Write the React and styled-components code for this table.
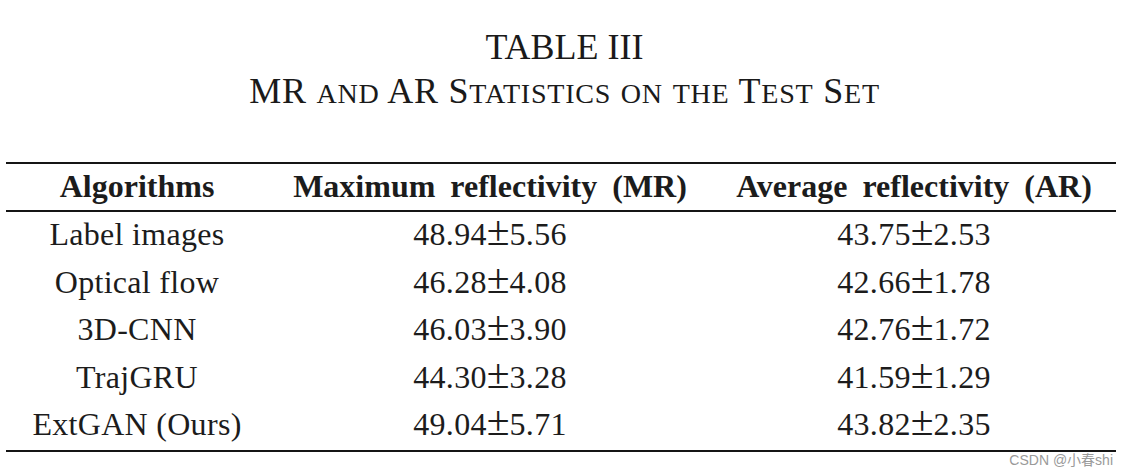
import React from 'react'
import styled, { createGlobalStyle } from 'styled-components';

const GlobalStyle = createGlobalStyle`
  html, body {
    margin: 0;
    padding: 0;
    background: #ffffff;
  }
  body {
    font-family: "Liberation Serif", "Times New Roman", serif;
    color: #1c1c1c;
  }
`;

const Page = styled.div`
  width: 1129px;
  height: 475px;
  overflow: hidden;
  background: #ffffff;
`;

const Caption = styled.div`
  padding-top: 25px;
  text-align: center;
  font-size: 36px;
  line-height: 44px;
  color: #1a1a1a;
`;

const CaptionLine = styled.div`
  letter-spacing: ${p => p.spread || 0}px;
`;

const Sc = styled.span`
  font-size: 0.78em;
`;

const Table = styled.div`
  margin: 46px 0 0 6px;
  width: 1110px;
  border-top: 2px solid #151515;
  border-bottom: 2px solid #151515;
`;

const Row = styled.div`
  display: grid;
  grid-template-columns: 262px 444px 404px;
  text-align: center;
  font-size: 32px;
  height: ${p => (p.head ? '48px' : '47.6px')};
  line-height: ${p => (p.head ? '45px' : '44px')};
  font-weight: ${p => (p.head ? 700 : 400)};
  word-spacing: ${p => (p.head ? '7px' : '0')};
  letter-spacing: ${p => (p.head ? '0' : '0.3px')};
  border-bottom: ${p => (p.head ? '2px solid #151515' : 'none')};
  box-sizing: border-box;
  white-space: nowrap;
`;

const Cell = styled.div``;

const Pm = styled.span`
  font-size: 1.3em;
  line-height: 0;
  letter-spacing: 0;
`;

const Mark = styled.div`
  text-align: right;
  padding-right: 16px;
  font-family: "Liberation Sans", "Noto Sans CJK SC", sans-serif;
  font-size: 14px;
  line-height: 14px;
  padding-top: 1px;
  color: #9a9a9a;
`;

const rows = [
  ['Label images', '48.94', '5.56', '43.75', '2.53'],
  ['Optical flow', '46.28', '4.08', '42.66', '1.78'],
  ['3D-CNN', '46.03', '3.90', '42.76', '1.72'],
  ['TrajGRU', '44.30', '3.28', '41.59', '1.29'],
  ['ExtGAN (Ours)', '49.04', '5.71', '43.82', '2.35'],
];

const Stat = ({ mean, sd }) => (
  <Cell>
    {mean}<Pm>±</Pm>{sd}
  </Cell>
);

const App = () => {
  return (
    <Page>
      <GlobalStyle />
      <Caption>
        <CaptionLine>TABLE III</CaptionLine>
        <CaptionLine spread={0.75}>
          MR <Sc>AND</Sc> AR S<Sc>TATISTICS</Sc> <Sc>ON</Sc> <Sc>THE</Sc> T<Sc>EST</Sc> S<Sc>ET</Sc>
        </CaptionLine>
      </Caption>

      <Table>
        <Row head>
          <Cell>Algorithms</Cell>
          <Cell>Maximum reflectivity (MR)</Cell>
          <Cell>Average reflectivity (AR)</Cell>
        </Row>
        {rows.map(r => (
          <Row key={r[0]}>
            <Cell>{r[0]}</Cell>
            <Stat mean={r[1]} sd={r[2]} />
            <Stat mean={r[3]} sd={r[4]} />
          </Row>
        ))}
      </Table>

      <Mark>CSDN @小春shi</Mark>
    </Page>
  )
}

export default App
